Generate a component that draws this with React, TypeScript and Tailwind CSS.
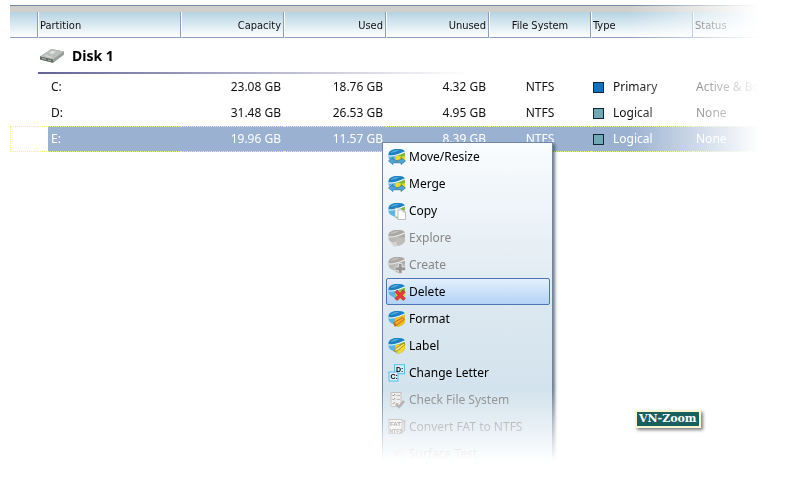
import type { ReactNode } from "react";

type Align = "left" | "right" | "center";

const alignClass: Record<Align, string> = {
  left: "text-left pl-px",
  right: "text-right pr-0.5",
  center: "text-center",
};

const columns: { title: string; align: Align }[] = [
  { title: "Partition", align: "left" },
  { title: "Capacity", align: "right" },
  { title: "Used", align: "right" },
  { title: "Unused", align: "right" },
  { title: "File System", align: "center" },
  { title: "Type", align: "left" },
  { title: "Status", align: "left" },
];

const partitions = [
  { name: "C:", capacity: "23.08 GB", used: "18.76 GB", unused: "4.32 GB", type: "Primary", status: "Active & Boot", selected: false },
  { name: "D:", capacity: "31.48 GB", used: "26.53 GB", unused: "4.95 GB", type: "Logical", status: "None", selected: false },
  { name: "E:", capacity: "19.96 GB", used: "11.57 GB", unused: "8.39 GB", type: "Logical", status: "None", selected: true },
];

function DiskIcon() {
  return (
    <svg width="24" height="16" viewBox="0 0 24 16" aria-hidden="true">
      <path d="M0 8.500 11.500 1 24 3.500v3L13 14.800 0 11.500z" fill="#858a87" />
      <path d="M0 8.500 11.500 1 24 3.500 13 11.500z" fill="#bcc0bd" />
      <path d="M13 11.500 24 3.500v3L13 14.800z" fill="#9a9e9c" />
      <path d="M0 8.500l13 3v3.300L0 11.500z" fill="#646a67" />
      <path d="M2 10.400l4 1M8 12l3 .8" stroke="#a9bdae" strokeWidth="1" />
      <path d="M9 5l3-2 4 .8-3 2.200z" fill="#e0e3e1" />
      <path d="M5 7.500l7 1.800" stroke="#dadddb" strokeWidth="1" />
    </svg>
  );
}

/* Rounded disk body shared by most of the menu icons. */
function Drum({ muted = false, children }: { muted?: boolean; children?: ReactNode }) {
  return (
    <svg width="18" height="18" viewBox="0 0 18 18" aria-hidden="true" className="shrink-0">
      <path d="M.5 6C.5 3 4.500 1 9.500 1S17 2.500 17 4.500V11c0 3-3.500 5-7.500 6C8 15.500 6 14.500 4 13.500 2 12.500.5 11 .5 9z" fill={muted ? "#b9b7b4" : "#58b5e6"} />
      <path d="M.8 5.500C1.500 2.700 5 1 9.500 1c3.800 0 6.400.8 7.200 2.300C13 4.200 10.500 6.800 7 7.300 4.500 7.600 2 7.500.6 7z" fill={muted ? "#aaa8a5" : "#1f7fc0"} />
      <path d="M3 4C5 2.300 8 1.700 11.500 2 9 3.500 6 4.500 2.500 5z" fill={muted ? "#c4c2bf" : "#4fabdf"} />
      <path d="M16.900 4.200C13 5.500 10.500 8 7 8.500c.5 3 1 6 2.500 8.500 4-1 7.500-3 7.500-6z" fill={muted ? "#bfbdb9" : "#f3d72c"} />
      <path d="M17 4.300C14.500 5 12.500 6.500 10.500 7.600c1 1.400 4 1.400 6.500.4z" fill={muted ? "#aeaca9" : "#7dbb3c"} />
      <path d="M.7 7.700C6 9 11 6.500 17 3.900" stroke={muted ? "#edeceb" : "#f2fafd"} strokeWidth="1.100" fill="none" />
      {children}
    </svg>
  );
}

function MoveIcon() {
  return (
    <Drum>
      <path d="M4 17.500C5 13 13 13 14 17.500z" fill="#f6fafd" />
      <path d="M.5 13 5 9.500v2l3.500 1v2.500L5 14.600v2z" fill="#4da6dc" stroke="#226a9e" strokeWidth=".6" />
      <path d="M17.500 13 13 9.500v2l-3.500 1v2.500l3.500-.4v2z" fill="#4da6dc" stroke="#226a9e" strokeWidth=".6" />
    </Drum>
  );
}

function CopyIcon() {
  return (
    <Drum>
      <path d="M7 6h5l2 2v7H7z" fill="#f4f4f4" stroke="#b3b7ba" strokeWidth=".7" />
      <path d="M10 8h5l2.500 2v7.500H10z" fill="#fff" stroke="#a6abae" strokeWidth=".7" />
      <path d="M15 8v2h2.500" fill="none" stroke="#a6abae" strokeWidth=".7" />
    </Drum>
  );
}

function ExploreIcon() {
  return (
    <Drum muted>
      <path d="M3 14l5-1.500 1.500 4.500L6 18z" fill="#d5d4d2" />
    </Drum>
  );
}

function CreateIcon() {
  return (
    <Drum muted>
      <path d="M10.500 7.500H14V11h3.500v3.500H14v3h-3.500v-3H7V11h3.500z" fill="#979593" stroke="#e5e4e2" strokeWidth=".8" />
    </Drum>
  );
}

function DeleteIcon() {
  return (
    <Drum>
      <path d="M7 9.200 9.200 7l2.900 3 3-3 2.200 2.200-3 3 3.200 3.200-2.200 2.200-3.200-3.200-3 3.200-2.200-2.200 3.100-3.200z" fill="#e23b3d" stroke="#b3262b" strokeWidth=".6" />
    </Drum>
  );
}

function FormatIcon() {
  return (
    <Drum>
      <path d="M7 8.500 16.900 4.500V11c0 3-3.400 5-7.400 6L6 14z" fill="#f2bd2b" />
      <path d="M6 12.500 14.500 7.500l1.800 2L8.500 15.500z" fill="#f7a42a" stroke="#a9660f" strokeWidth=".8" />
      <path d="M5 12l4 3.500-2.500 1.200z" fill="#bd701a" />
    </Drum>
  );
}

function LabelIcon() {
  return (
    <Drum>
      <path d="M6 14 7.500 11.500 16 6l1 1.500L9 14z" fill="#fae07a" stroke="#b07d12" strokeWidth=".8" />
    </Drum>
  );
}

function LetterIcon() {
  return (
    <svg width="18" height="18" viewBox="0 0 18 18" aria-hidden="true" className="shrink-0">
      <rect x="6.500" y=".7" width="10" height="9" fill="#d8f0fc" stroke="#5bbcec" />
      <rect x="1" y="8" width="9" height="9" fill="#d8f0fc" stroke="#5bbcec" />
      <text x="8" y="8" fontSize="7" fontWeight="700" className="font-['Liberation_Sans',sans-serif]">D:</text>
      <text x="2.500" y="15.300" fontSize="7" fontWeight="700" className="font-['Liberation_Sans',sans-serif]">C:</text>
    </svg>
  );
}

function CheckIcon() {
  return (
    <svg width="18" height="18" viewBox="0 0 18 18" aria-hidden="true" className="shrink-0" fill="none">
      <path d="M3 1.500h10v14H3z" fill="#eeecea" stroke="#bebbb8" />
      <path d="M4.500 4l1 1 1.500-2M4.500 8l1 1 1.500-2M4.500 12l1 1 1.500-2" stroke="#92908e" />
      <path d="M8.500 4.500H12M8.500 8.500H12M8.500 12.500h2" stroke="#b3b1af" />
      <path d="M8 13l3 3 5-6" stroke="#a19f9d" strokeWidth="2.500" />
    </svg>
  );
}

function ConvertIcon() {
  return (
    <svg width="18" height="18" viewBox="0 0 18 18" aria-hidden="true" className="shrink-0">
      <rect x="1" y="1.500" width="13" height="14" fill="#efedeb" stroke="#a5a29f" />
      <path d="M14.500 3h2v9l-2 1.500" fill="none" stroke="#a5a29f" strokeWidth="1.500" />
      <text x="2" y="7.500" fontSize="6" fontWeight="700" fill="#666" className="font-['Liberation_Sans',sans-serif]">FAT</text>
      <text x="1.500" y="14.500" fontSize="5" fontWeight="700" fill="#666" className="font-['Liberation_Sans',sans-serif]">NTFS</text>
    </svg>
  );
}

function SurfaceIcon() {
  return (
    <svg width="18" height="18" viewBox="0 0 18 18" aria-hidden="true" className="shrink-0">
      <path d="M4 9l5-4 4 2-4 5z" fill="#bbb" />
      <circle cx="13" cy="7" r="2.500" fill="#ccc" />
    </svg>
  );
}

const menuItems: { label: string; icon: ReactNode; disabled?: boolean; active?: boolean }[] = [
  { label: "Move/Resize", icon: <MoveIcon /> },
  { label: "Merge", icon: <MoveIcon /> },
  { label: "Copy", icon: <CopyIcon /> },
  { label: "Explore", icon: <ExploreIcon />, disabled: true },
  { label: "Create", icon: <CreateIcon />, disabled: true },
  { label: "Delete", icon: <DeleteIcon />, active: true },
  { label: "Format", icon: <FormatIcon /> },
  { label: "Label", icon: <LabelIcon /> },
  { label: "Change Letter", icon: <LetterIcon /> },
  { label: "Check File System", icon: <CheckIcon />, disabled: true },
  { label: "Convert FAT to NTFS", icon: <ConvertIcon />, disabled: true },
  { label: "Surface Test", icon: <SurfaceIcon />, disabled: true },
];

function PartitionTable() {
  return (
    <div className="ml-2.5 pt-[5px] [mask-image:linear-gradient(to_right,black_calc(100%-170px),transparent_calc(100%-40px))]">
      <div className="h-[7px] border-t border-[#7088a8] bg-[#d0cfcc]" />
      <table className="w-full table-fixed border-separate border-spacing-0">
        <colgroup>
          <col className="w-7" />
          <col className="w-[143px]" />
          <col className="w-[103px]" />
          <col className="w-[102px]" />
          <col className="w-[103px]" />
          <col className="w-[102px]" />
          <col className="w-[102px]" />
          <col />
        </colgroup>
        <thead>
          <tr className="h-[26px] font-['DejaVu_Sans_Condensed','DejaVu_Sans',sans-serif] text-[11px]">
            <td className="border-r border-b border-[#8c9cc0] bg-linear-to-b from-[#b5d3e2] to-white" />
            {columns.map((c) => (
              <th
                key={c.title}
                scope="col"
                className={`border-r border-b border-l border-[#8c9cc0] border-l-white bg-linear-to-b from-[#b5d3e2] to-white p-0 pt-0.5 font-normal last:border-r-0 ${alignClass[c.align]}`}
              >
                {c.title}
              </th>
            ))}
          </tr>
        </thead>
        <tbody>
          <tr className="h-9">
            <td className="p-0" />
            <th colSpan={7} scope="rowgroup" className="p-0 text-left align-bottom">
              <span className="flex h-[34px] items-center gap-2 pt-0.5 pl-0.5 text-sm leading-4 font-bold text-black">
                <DiskIcon />
                Disk 1
              </span>
              <span className="block h-0.5 w-[430px] bg-linear-to-r from-[#636296] to-transparent" />
            </th>
          </tr>
          {partitions.map((p) => (
            <tr
              key={p.name}
              aria-selected={p.selected}
              className={
                p.selected
                  ? "h-[26px] bg-[linear-gradient(to_right,white_38px,#9ab1d1_38px)] text-white *:border-y *:border-dotted *:border-[#f4f47c] *:first:border-l"
                  : "h-[26px]"
              }
            >
              <td className="p-0" />
              <td className="p-0 pl-[13px]">{p.name}</td>
              <td className="p-0 pr-[3px] text-right">{p.capacity}</td>
              <td className="p-0 pr-[3px] text-right">{p.used}</td>
              <td className="p-0 pr-[3px] text-right">{p.unused}</td>
              <td className="p-0 text-center">NTFS</td>
              <td className="p-0 pl-0.5">
                <span className="flex items-center gap-[9px]">
                  <span className={`size-[11px] border border-[#12263a] ${p.type === "Primary" ? "bg-[#0b74c4]" : "bg-[#72a8b4]"}`} />
                  {p.type}
                </span>
              </td>
              <td className="p-0 pl-[3px] whitespace-nowrap">{p.status}</td>
            </tr>
          ))}
        </tbody>
      </table>
    </div>
  );
}

function ContextMenu() {
  return (
    <div className="absolute top-[142px] left-[382px] pr-2 [mask-image:linear-gradient(to_bottom,black_76%,transparent_98%)]">
      <ul
        role="menu"
        aria-label="Partition actions"
        className="w-[171px] border border-[#6d86a6] bg-linear-to-b from-[#fafcfe] via-[#dce8f0] to-[#cbdeea] pr-0.5 pl-[3px] shadow-[2px_2px_3px_rgba(50,60,75,0.7)]"
      >
        {menuItems.map((m) => (
          <li key={m.label} role="none">
            <button
              type="button"
              role="menuitem"
              disabled={m.disabled}
              className={`flex h-[27px] w-full items-center gap-[3px] rounded-xs border pl-px text-left whitespace-nowrap ${
                m.active ? "border-[#4f74b3] bg-linear-to-b from-[#e3effc] to-[#b3d3f6]" : "border-transparent"
              } ${m.disabled ? "text-[#858585]" : "text-black"}`}
            >
              {m.icon}
              {m.label}
            </button>
          </li>
        ))}
      </ul>
    </div>
  );
}

export default function App() {
  return (
    <main className="relative min-h-screen bg-white font-['Noto_Sans','Open_Sans',sans-serif] text-xs leading-4 text-[#111]">
      <PartitionTable />
      <ContextMenu />
      <div className="absolute top-[410px] left-[635px] border-2 border-[#fbf6d0] bg-[#17605f] px-0.5 font-['DejaVu_Serif',serif] text-[11px] leading-[14px] font-bold text-white shadow-[2px_2px_3px_rgba(0,0,0,0.5)]">
        VN-Zoom
      </div>
    </main>
  );
}
